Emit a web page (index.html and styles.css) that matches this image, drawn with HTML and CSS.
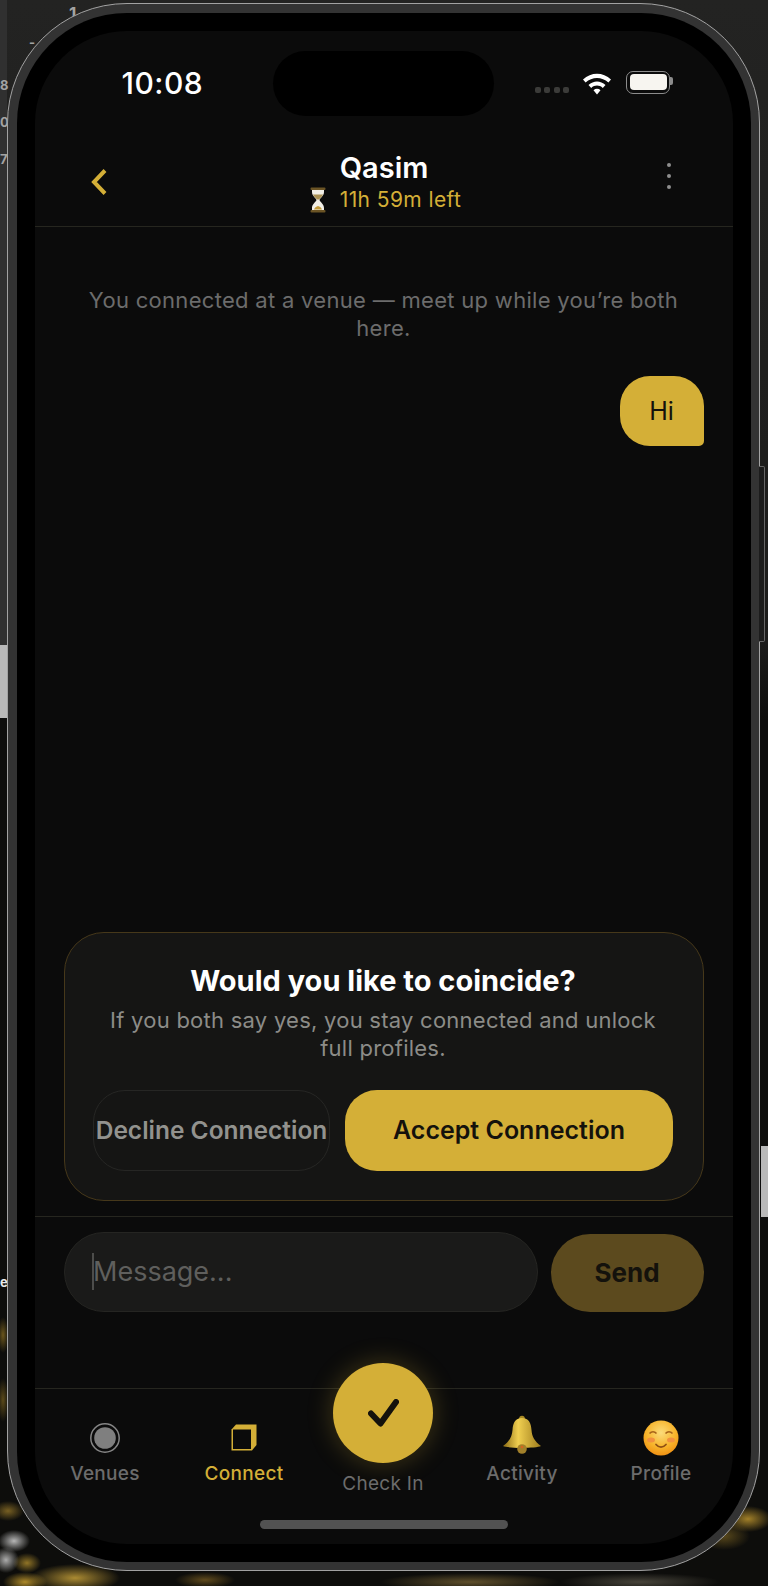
FILE: index.html
```html
<!DOCTYPE html>
<html lang="en">

<head>
    <meta charset="UTF-8">
    <meta name="viewport" content="width=device-width, initial-scale=1.0">
    <title>Chat - Qasim</title>
    <link rel="stylesheet" href="styles.css">
</head>

<body>
    <!-- bits of the desktop showing behind the simulator -->
    <span class="scrap scrap-one">1</span>
    <span class="scrap scrap-dash">-</span>
    <span class="scrap scrap-eight">8</span>
    <span class="scrap scrap-zero">0</span>
    <span class="scrap scrap-seven">7</span>
    <span class="scrap scrap-e">e</span>
    <div class="strip strip-left"></div>
    <div class="strip strip-right"></div>

    <div class="device">
        <div class="side-button"></div>
        <div class="bezel">
            <div class="screen">
                <div class="status">
                    <div class="time">10:08</div>
                    <div class="island"></div>
                    <div class="status-icons">
                        <div class="signal"><i></i><i></i><i></i><i></i></div>
                        <svg class="wifi" viewBox="0 0 30 24" width="30" height="24">
                            <path d="M1 8.500C9 .8 21 .8 29 8.500l-2.600 3C20 5.400 10 5.400 3.600 11.500z" fill="#fff" />
                            <path d="M6.500 14C11.500 9.300 18.500 9.300 23.500 14l-2.700 3C17.300 13.800 12.700 13.800 9.200 17z" fill="#fff" />
                            <path d="M11.500 19.200c2-1.800 5-1.800 7 0L15 23.500z" fill="#fff" />
                        </svg>
                        <div class="battery"><div class="battery-fill"></div></div>
                    </div>
                </div>

                <header class="chat-header">
                    <svg class="back" viewBox="0 0 18 28" width="18" height="28">
                        <path d="M15 2.500L4 14l11 11.500" fill="none" stroke="#d4af37" stroke-width="4" />
                    </svg>
                    <div class="peer">
                        <div class="peer-name">Qasim</div>
                        <div class="peer-time">
                            <svg viewBox="0 0 18 26" width="18" height="26">
                                <path d="M3 2h12v3c0 4-4 6-4.500 8 .5 2 4.500 4 4.500 8v3H3v-3c0-4 4-6 4.500-8C7 11 3 9 3 5z" fill="#f1eee6" />
                                <path d="M4 7.500h10c-.5 2-2.500 3-4 5H8c-1.500-2-3.500-3-4-5z" fill="#a98f52" />
                                <path d="M5 22.500c1-2.500 2.500-3 4-3.500 1.500.5 3 1 4 3.500z" fill="#c29a3a" />
                                <rect x="1.500" y="0.500" width="15" height="2.500" rx="1" fill="#6b5425" />
                                <rect x="1.500" y="23" width="15" height="2.500" rx="1" fill="#6b5425" />
                            </svg>
                            <span>11h 59m left</span>
                        </div>
                    </div>
                    <div class="kebab"><i></i><i></i><i></i></div>
                </header>

                <main class="chat">
                    <p class="chat-note">You connected at a venue — meet up while you’re both here.</p>
                    <div class="bubble">Hi</div>
                </main>

                <section class="prompt">
                    <h2>Would you like to coincide?</h2>
                    <p>If you both say yes, you stay connected and unlock full profiles.</p>
                    <div class="prompt-actions">
                        <button class="btn-decline">Decline Connection</button>
                        <button class="btn-accept">Accept Connection</button>
                    </div>
                </section>

                <div class="composer">
                    <div class="message-box"><span class="caret"></span>Message...</div>
                    <button class="btn-send">Send</button>
                </div>

                <nav class="tabs">
                    <div class="tab">
                        <svg class="tab-icon" viewBox="0 0 36 36">
                            <circle cx="18" cy="18" r="14.200" fill="none" stroke="#858585" stroke-width="1.500" />
                            <circle cx="18" cy="18" r="10.800" fill="#7f7f7f" />
                        </svg>
                        <span>Venues</span>
                    </div>
                    <div class="tab tab-active">
                        <svg class="tab-icon" viewBox="0 0 36 36">
                            <path d="M5.500 9.500L10 4.500h20.500v20.500l-4.500 5.500H5.500z" fill="#d4af37" />
                            <rect x="7" y="9.500" width="18" height="19.500" fill="#0b0b0b" />
                        </svg>
                        <span>Connect</span>
                    </div>
                    <div class="tab tab-center">
                        <div class="checkin">
                            <svg viewBox="0 0 31 28" width="31" height="28">
                                <path d="M3 14.500L12.500 24.500L28 3" fill="none" stroke="#14120c" stroke-width="6" stroke-linecap="round" stroke-linejoin="round" />
                            </svg>
                        </div>
                        <span>Check In</span>
                    </div>
                    <div class="tab">
                        <svg class="tab-icon tab-emoji" viewBox="0 0 40 40">
                            <defs>
                                <linearGradient id="bellGold" x1="0" x2="1" y1="0" y2="0">
                                    <stop offset="0" stop-color="#8a6a14" />
                                    <stop offset="0.4" stop-color="#f0cf50" />
                                    <stop offset="1" stop-color="#9d7b1c" />
                                </linearGradient>
                            </defs>
                            <circle cx="20" cy="3.500" r="2.800" fill="#a98a25" />
                            <path d="M20 3c-7 0-9 5-9.500 12-.5 7-3 11-9.500 16 5 2.500 33 2.500 38 0-6.500-5-9-9-9.500-16C29 8 27 3 20 3z" fill="url(#bellGold)" />
                            <circle cx="20" cy="34" r="4.800" fill="#a2802a" />
                            <circle cx="20" cy="32" r="1.300" fill="#d9641e" />
                        </svg>
                        <span>Activity</span>
                    </div>
                    <div class="tab">
                        <svg class="tab-icon" viewBox="0 0 36 36">
                            <defs>
                                <radialGradient id="faceGold" cx="0.5" cy="0.35" r="0.7">
                                    <stop offset="0" stop-color="#fbdc7a" />
                                    <stop offset="0.6" stop-color="#f7b32a" />
                                    <stop offset="1" stop-color="#ee8a10" />
                                </radialGradient>
                            </defs>
                            <circle cx="18" cy="18" r="17.500" fill="url(#faceGold)" />
                            <path d="M6.500 13.500c2-2.500 5-2.500 7 0M22.500 13.500c2-2.500 5-2.500 7 0" fill="none" stroke="#a8641a" stroke-width="1.500" />
                            <ellipse cx="8" cy="20" rx="4" ry="2.500" fill="#f2913f" />
                            <ellipse cx="28" cy="20" rx="4" ry="2.500" fill="#f2913f" />
                            <path d="M13 24.500c3 3.500 7 3.500 10 0" fill="none" stroke="#8e4f13" stroke-width="1.700" stroke-linecap="round" />
                        </svg>
                        <span>Profile</span>
                    </div>
                </nav>

                <div class="home-indicator"></div>
            </div>
        </div>
    </div>
</body>

</html>
```

FILE: styles.css
```css
* {
    box-sizing: border-box;
}

body {
    position: relative;
    width: 768px;
    height: 1586px;
    margin: 0;
    padding: 3px 8px 0 7px;
    overflow: hidden;
    font-family: 'Inter', 'Liberation Sans', sans-serif;
    background:
        radial-gradient(ellipse 16px 10px at 8px 1511px, rgba(190, 150, 50, .6), transparent),
        radial-gradient(ellipse 16px 11px at 14px 1541px, rgba(225, 225, 225, .8), transparent),
        radial-gradient(ellipse 13px 13px at 6px 1560px, rgba(225, 225, 225, .75), transparent),
        radial-gradient(ellipse 14px 10px at 27px 1563px, rgba(200, 160, 50, .7), transparent),
        radial-gradient(ellipse 22px 10px at 25px 1582px, rgba(215, 170, 50, .8), transparent),
        radial-gradient(ellipse 45px 14px at 75px 1578px, rgba(210, 170, 60, .8), transparent),
        radial-gradient(ellipse 30px 8px at 205px 1580px, rgba(150, 115, 40, .6), transparent),
        radial-gradient(ellipse 90px 9px at 470px 1582px, rgba(150, 125, 65, .6), transparent),
        radial-gradient(ellipse 80px 9px at 640px 1582px, rgba(110, 105, 90, .6), transparent),
        radial-gradient(ellipse 24px 13px at 748px 1519px, rgba(210, 165, 50, .75), transparent),
        radial-gradient(ellipse 26px 14px at 724px 1536px, rgba(150, 120, 40, .55), transparent),
        radial-gradient(ellipse 6px 18px at 3px 1335px, rgba(170, 135, 40, .6), transparent),
        radial-gradient(ellipse 6px 22px at 3px 1400px, rgba(170, 135, 40, .5), transparent),
        linear-gradient(#303030, #303030) 0 0 / 7px 645px no-repeat,
        linear-gradient(to bottom, #232322 0, #1c1c1b 640px, #0d0d0c 720px, #0d0d0b 1586px);
}

.scrap {
    position: absolute;
    color: #a3a3a3;
    font-size: 13px;
    font-weight: 700;
    line-height: 1;
}

.scrap-one { left: 69px; top: 6px; font-size: 17px; }
.scrap-dash { left: 29px; top: 36px; }
.scrap-eight { left: 0; top: 79px; }
.scrap-zero { left: 0; top: 116px; }
.scrap-seven { left: 0; top: 153px; }
.scrap-e { left: 0; top: 1276px; color: #e8e8e8; }

.strip {
    position: absolute;
    background: #b9b9b9;
}

.strip-left { left: 0; top: 645px; width: 7px; height: 73px; }
.strip-right { left: 761px; top: 1146px; width: 7px; height: 71px; }

.device {
    position: relative;
    width: 753px;
    height: 1568px;
    padding: 8.5px;
    background: #333;
    border: 1.5px solid #a2a2a2;
    border-radius: 120px;
}

.side-button {
    position: absolute;
    left: 100%;
    top: 462px;
    width: 6px;
    height: 176px;
    border: 1px solid #666;
    border-left: 0;
    border-radius: 0 2px 2px 0;
    background: #1c1c1c;
}

.bezel {
    height: 100%;
    padding: 18px;
    background: #000;
    border-radius: 110px;
}

.screen {
    position: relative;
    display: flex;
    flex-direction: column;
    height: 100%;
    overflow: hidden;
    background: #0b0b0b;
    border-radius: 92px;
}

/* status bar */
.status {
    display: grid;
    grid-template-columns: 238px 221px 1fr;
    flex: none;
    height: 100px;
    padding-top: 20px;
}

.time {
    padding: 14px 0 0 87px;
    color: #fff;
    font-size: 30px;
    font-weight: 500;
    letter-spacing: .5px;
    line-height: 36px;
}

.island {
    height: 65px;
    background: #000;
    border-radius: 33px;
}

.status-icons {
    display: flex;
    align-items: flex-start;
    padding: 20px 0 0 41px;
}

.signal {
    display: flex;
    gap: 3.500px;
    margin-top: 16px;
}

.signal i {
    width: 6px;
    height: 6px;
    border-radius: 2px;
    background: #3b3b39;
}

.wifi {
    margin-left: 13px;
}

.battery {
    position: relative;
    width: 44px;
    height: 23px;
    margin-left: 14px;
    padding: 2.500px;
    border: 1.500px solid #8c8c8c;
    border-radius: 7px;
}

.battery::after {
    content: "";
    position: absolute;
    left: 100%;
    top: 5px;
    width: 3px;
    height: 8px;
    margin-left: 1px;
    border-radius: 0 2px 2px 0;
    background: #8c8c8c;
}

.battery-fill {
    height: 100%;
    background: #f7f5f0;
    border-radius: 4px;
}

/* header */
.chat-header {
    display: grid;
    grid-template-columns: 1fr auto 1fr;
    flex: none;
    height: 96px;
    padding: 20px 53px 0;
    border-bottom: 1px solid #26261f;
}

.back {
    margin: 17px 0 0 2px;
}

.peer {
    text-align: center;
}

.peer-name {
    margin-left: 1px;
    color: #fff;
    font-size: 29px;
    font-weight: 600;
    line-height: 34px;
}

.peer-time {
    display: flex;
    align-items: center;
    justify-content: center;
    gap: 13px;
    height: 30px;
    margin-left: 3px;
    color: #d4af37;
    font-size: 21px;
    letter-spacing: .4px;
}

.kebab {
    display: flex;
    flex-direction: column;
    gap: 7px;
    justify-self: end;
    margin: 12px 9px 0 0;
}

.kebab i {
    width: 4px;
    height: 4px;
    border-radius: 50%;
    background: #8f8f8f;
}

/* messages */
.chat {
    flex: 1;
    padding: 59px 29px 0;
}

.chat-note {
    margin: 0 auto;
    max-width: 610px;
    color: #6c6c6c;
    font-size: 22px;
    letter-spacing: .3px;
    line-height: 28px;
    text-align: center;
}

.bubble {
    width: 84px;
    height: 70px;
    margin: 34px 0 0 auto;
    background: #d4af37;
    border-radius: 30px 30px 5px 30px;
    color: #14120c;
    font-size: 25px;
    line-height: 70px;
    text-align: center;
}

/* coincide prompt */
.prompt {
    flex: none;
    height: 269px;
    margin: 0 29px 15px;
    padding: 31px 29.500px 0 28.500px;
    background: #151514;
    border: 1.500px solid #46381a;
    border-radius: 40px;
    text-align: center;
}

.prompt h2 {
    margin: 0;
    color: #fff;
    font-size: 29px;
    font-weight: 700;
    line-height: 34px;
}

.prompt p {
    margin: 8px auto 0;
    max-width: 560px;
    color: #8c8c88;
    font-size: 22px;
    letter-spacing: .25px;
    line-height: 28px;
}

.prompt-actions {
    display: flex;
    gap: 15px;
    margin-top: 28px;
}

button {
    padding: 0;
    font-family: inherit;
    font-size: 24px;
    white-space: nowrap;
}

.btn-decline {
    flex: none;
    width: 237px;
    height: 81px;
    background: transparent;
    border: 1.500px solid #262624;
    border-radius: 32px;
    color: #92928e;
    font-size: 24.500px;
    font-weight: 600;
}

.btn-accept {
    flex: 1;
    height: 81px;
    background: #d4af37;
    border: 0;
    border-radius: 32px;
    color: #14120c;
    font-size: 25px;
    font-weight: 600;
}

/* composer */
.composer {
    display: flex;
    align-items: flex-end;
    flex: none;
    gap: 13px;
    height: 96px;
    padding: 15px 29px 0;
    border-top: 1px solid #26261f;
}

.message-box {
    display: flex;
    align-items: center;
    flex: 1;
    height: 80px;
    padding-left: 27px;
    background: #1a1a19;
    border: 1.500px solid #252522;
    border-radius: 40px;
    color: #5f5f5d;
    font-size: 27px;
}

.caret {
    width: 2.500px;
    height: 37px;
    margin-right: -1px;
    background: #4d4d4b;
}

.btn-send {
    flex: none;
    width: 153px;
    height: 78px;
    background: #5c4a1e;
    border: 0;
    border-radius: 39px;
    color: #14120c;
    font-size: 26px;
    font-weight: 700;
}

/* tab bar */
.tabs {
    display: grid;
    grid-template-columns: repeat(5, 139px);
    flex: none;
    height: 156px;
    margin-top: 76px;
    padding: 0 1px;
    border-top: 1px solid #26261f;
}

.tab {
    display: flex;
    flex-direction: column;
    align-items: center;
    gap: 6px;
    padding-top: 31px;
    color: #6c6c6c;
    font-size: 19px;
    font-weight: 500;
    letter-spacing: .3px;
    line-height: 24px;
}

.tab-active {
    color: #d4af37;
}

.tab-icon {
    flex: none;
    width: 36px;
    height: 36px;
}

.tab-emoji {
    width: 40px;
    height: 40px;
    margin: -5px 0 1px;
}

.tab-center {
    gap: 9px;
    margin-top: -26px;
    padding-top: 0;
    font-weight: 400;
}

.checkin {
    display: flex;
    align-items: center;
    justify-content: center;
    flex: none;
    width: 100px;
    height: 100px;
    background: #d4af37;
    border-radius: 50%;
    box-shadow: 0 0 26px rgba(212, 175, 55, .28);
}

.home-indicator {
    position: absolute;
    left: 225px;
    bottom: 15px;
    width: 248px;
    height: 9px;
    background: #525252;
    border-radius: 5px;
}
```
